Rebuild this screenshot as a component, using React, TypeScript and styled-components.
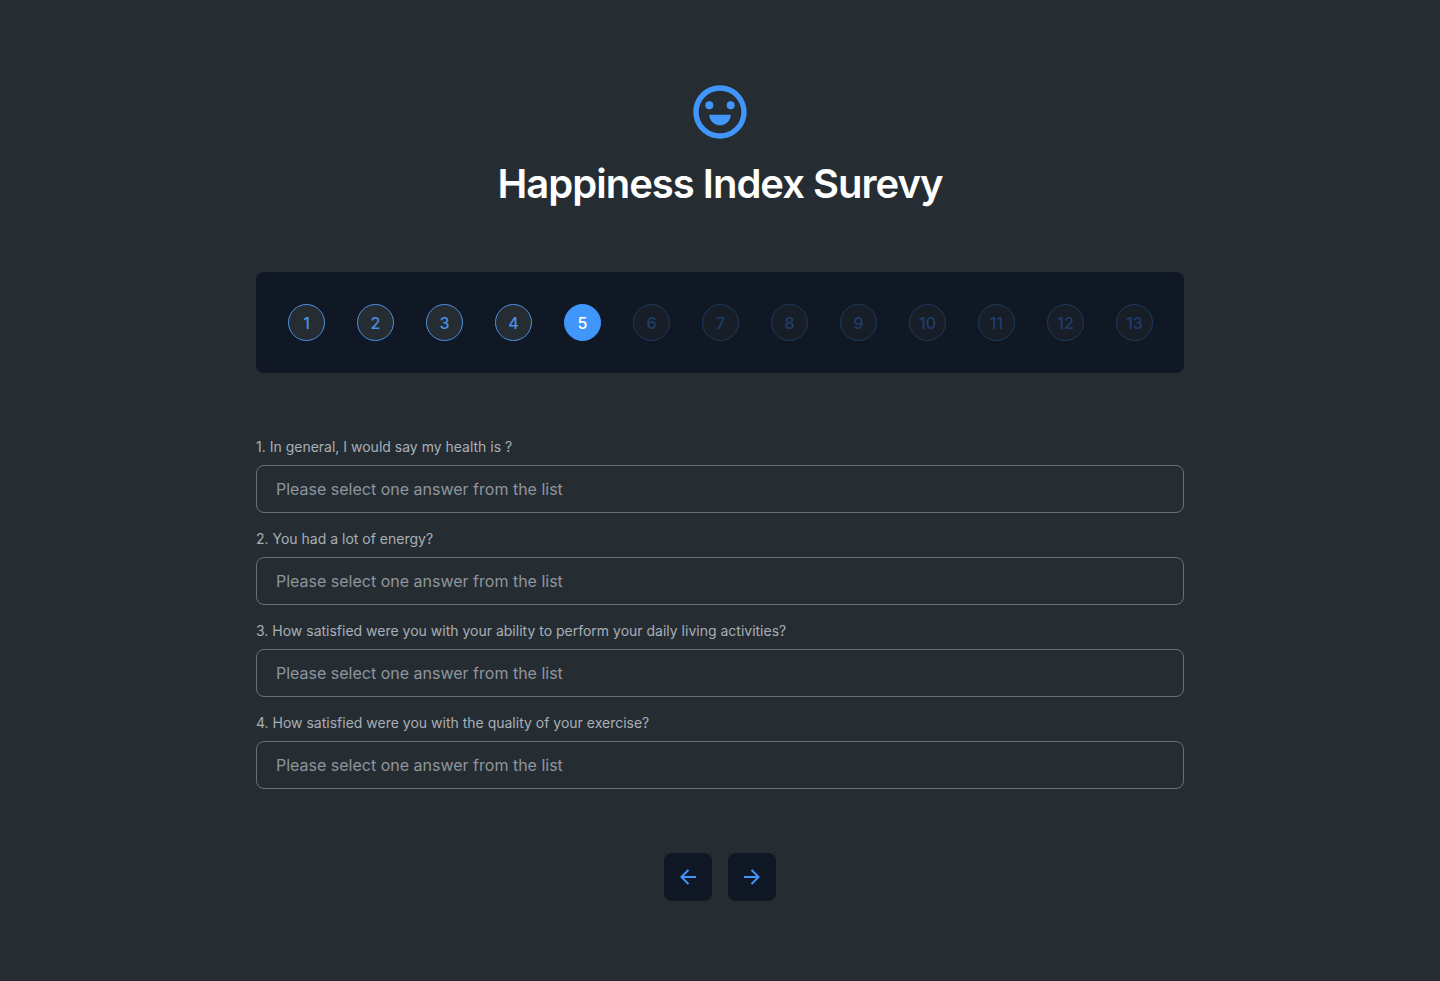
import React from "react";
import styled, { createGlobalStyle, css } from "styled-components";

const GlobalStyle = createGlobalStyle`
  *, *::before, *::after { box-sizing: border-box; }
  body {
    margin: 0;
    background: #252d33;
    color: #ffffff;
    font-family: Inter, "Liberation Sans", sans-serif;
    -webkit-font-smoothing: antialiased;
  }
`;

const Page = styled.main`
  display: flex;
  flex-direction: column;
  align-items: center;
  gap: 64px;
  width: 100%;
  max-width: 960px;
  margin: 0 auto;
  padding: 80px 16px;
`;

const Header = styled.header`
  display: flex;
  flex-direction: column;
  align-items: center;
  gap: 16px;
`;

const Logo = styled.svg`
  width: 64px;
  height: 64px;
  fill: #4096fa;
`;

const Title = styled.h1`
  margin: 0;
  font-size: 40px;
  line-height: 48px;
  font-weight: 600;
  letter-spacing: -1px;
  text-align: center;
`;

const Steps = styled.ol`
  display: flex;
  flex-wrap: wrap;
  gap: 32px;
  width: 100%;
  margin: 0;
  padding: 32px 30px 32px 32px;
  list-style: none;
  background: #101725;
  border-radius: 8px;
`;

type StepState = "done" | "current" | "upcoming";

const stepLooks = {
  done: css`
    background: #252d33;
    border-color: #4a90e2;
    color: #4a90e2;
  `,
  current: css`
    background: #4096fa;
    border-color: #4096fa;
    color: #ffffff;
  `,
  upcoming: css`
    background: #171e28;
    border-color: #1f395c;
    color: #1f3d6b;
  `,
};

const StepButton = styled.button<{ $state: StepState }>`
  display: flex;
  align-items: center;
  justify-content: center;
  width: 37px;
  height: 37px;
  padding: 0;
  border: 1px solid;
  border-radius: 50%;
  font: 500 16px/24px Inter, "Liberation Sans", sans-serif;
  cursor: pointer;
  ${({ $state }) => stepLooks[$state]}
`;

const Questions = styled.form`
  display: flex;
  flex-direction: column;
  gap: 16px;
  width: 100%;
`;

const Question = styled.div`
  display: flex;
  flex-direction: column;
  gap: 8px;
`;

const QuestionLabel = styled.label`
  font-size: 14px;
  line-height: 20px;
  color: #a9afb6;
`;

const AnswerSelect = styled.select`
  width: 100%;
  height: 48px;
  padding: 0 19px;
  appearance: none;
  background: transparent;
  border: 1px solid #686f76;
  border-radius: 8px;
  color: #8f959c;
  font: 400 16px/24px Inter, "Liberation Sans", sans-serif;
`;

const Pager = styled.nav`
  display: flex;
  gap: 16px;
`;

const PagerButton = styled.button`
  display: flex;
  align-items: center;
  justify-content: center;
  width: 48px;
  height: 48px;
  padding: 0;
  border: 0;
  border-radius: 8px;
  background: #101725;
  cursor: pointer;
`;

const ArrowIcon = styled.svg`
  width: 24px;
  height: 24px;
  fill: #4096fa;
`;

const CURRENT_STEP = 5;
const STEPS = Array.from({ length: 13 }, (_, i) => i + 1);

const QUESTIONS = [
  "1. In general, I would say my health is ?",
  "2. You had a lot of energy?",
  "3. How satisfied were you with your ability to perform your daily living activities?",
  "4. How satisfied were you with the quality of your exercise?",
];

const stateOf = (step: number): StepState =>
  step < CURRENT_STEP ? "done" : step === CURRENT_STEP ? "current" : "upcoming";

export default function App() {
  return (
    <>
      <GlobalStyle />
      <Page>
        <Header>
          <Logo viewBox="0 0 24 24" aria-hidden="true">
            <path d="M12 22C6.477 22 2 17.523 2 12S6.477 2 12 2s10 4.477 10 10-4.477 10-10 10zm0-2a8 8 0 1 0 0-16 8 8 0 0 0 0 16zm-4-7h8a4 4 0 1 1-8 0zm0-2a1.5 1.5 0 1 1 0-3 1.5 1.5 0 0 1 0 3zm8 0a1.5 1.5 0 1 1 0-3 1.5 1.5 0 0 1 0 3z" />
          </Logo>
          <Title>Happiness Index Surevy</Title>
        </Header>

        <Steps>
          {STEPS.map((step) => (
            <li key={step}>
              <StepButton
                type="button"
                $state={stateOf(step)}
                aria-current={step === CURRENT_STEP ? "step" : undefined}
              >
                {step}
              </StepButton>
            </li>
          ))}
        </Steps>

        <Questions>
          {QUESTIONS.map((text, i) => (
            <Question key={text}>
              <QuestionLabel htmlFor={`question-${i}`}>{text}</QuestionLabel>
              <AnswerSelect id={`question-${i}`} defaultValue="">
                <option value="">Please select one answer from the list</option>
              </AnswerSelect>
            </Question>
          ))}
        </Questions>

        <Pager>
          <PagerButton type="button" aria-label="Previous">
            <ArrowIcon viewBox="0 0 24 24" aria-hidden="true">
              <path d="M7.828 11H20v2H7.828l5.364 5.364-1.414 1.414L4 12l7.778-7.778 1.414 1.414z" />
            </ArrowIcon>
          </PagerButton>
          <PagerButton type="button" aria-label="Next">
            <ArrowIcon viewBox="0 0 24 24" aria-hidden="true">
              <path d="M16.172 11l-5.364-5.364 1.414-1.414L20 12l-7.778 7.778-1.414-1.414L16.172 13H4v-2z" />
            </ArrowIcon>
          </PagerButton>
        </Pager>
      </Page>
    </>
  );
}
